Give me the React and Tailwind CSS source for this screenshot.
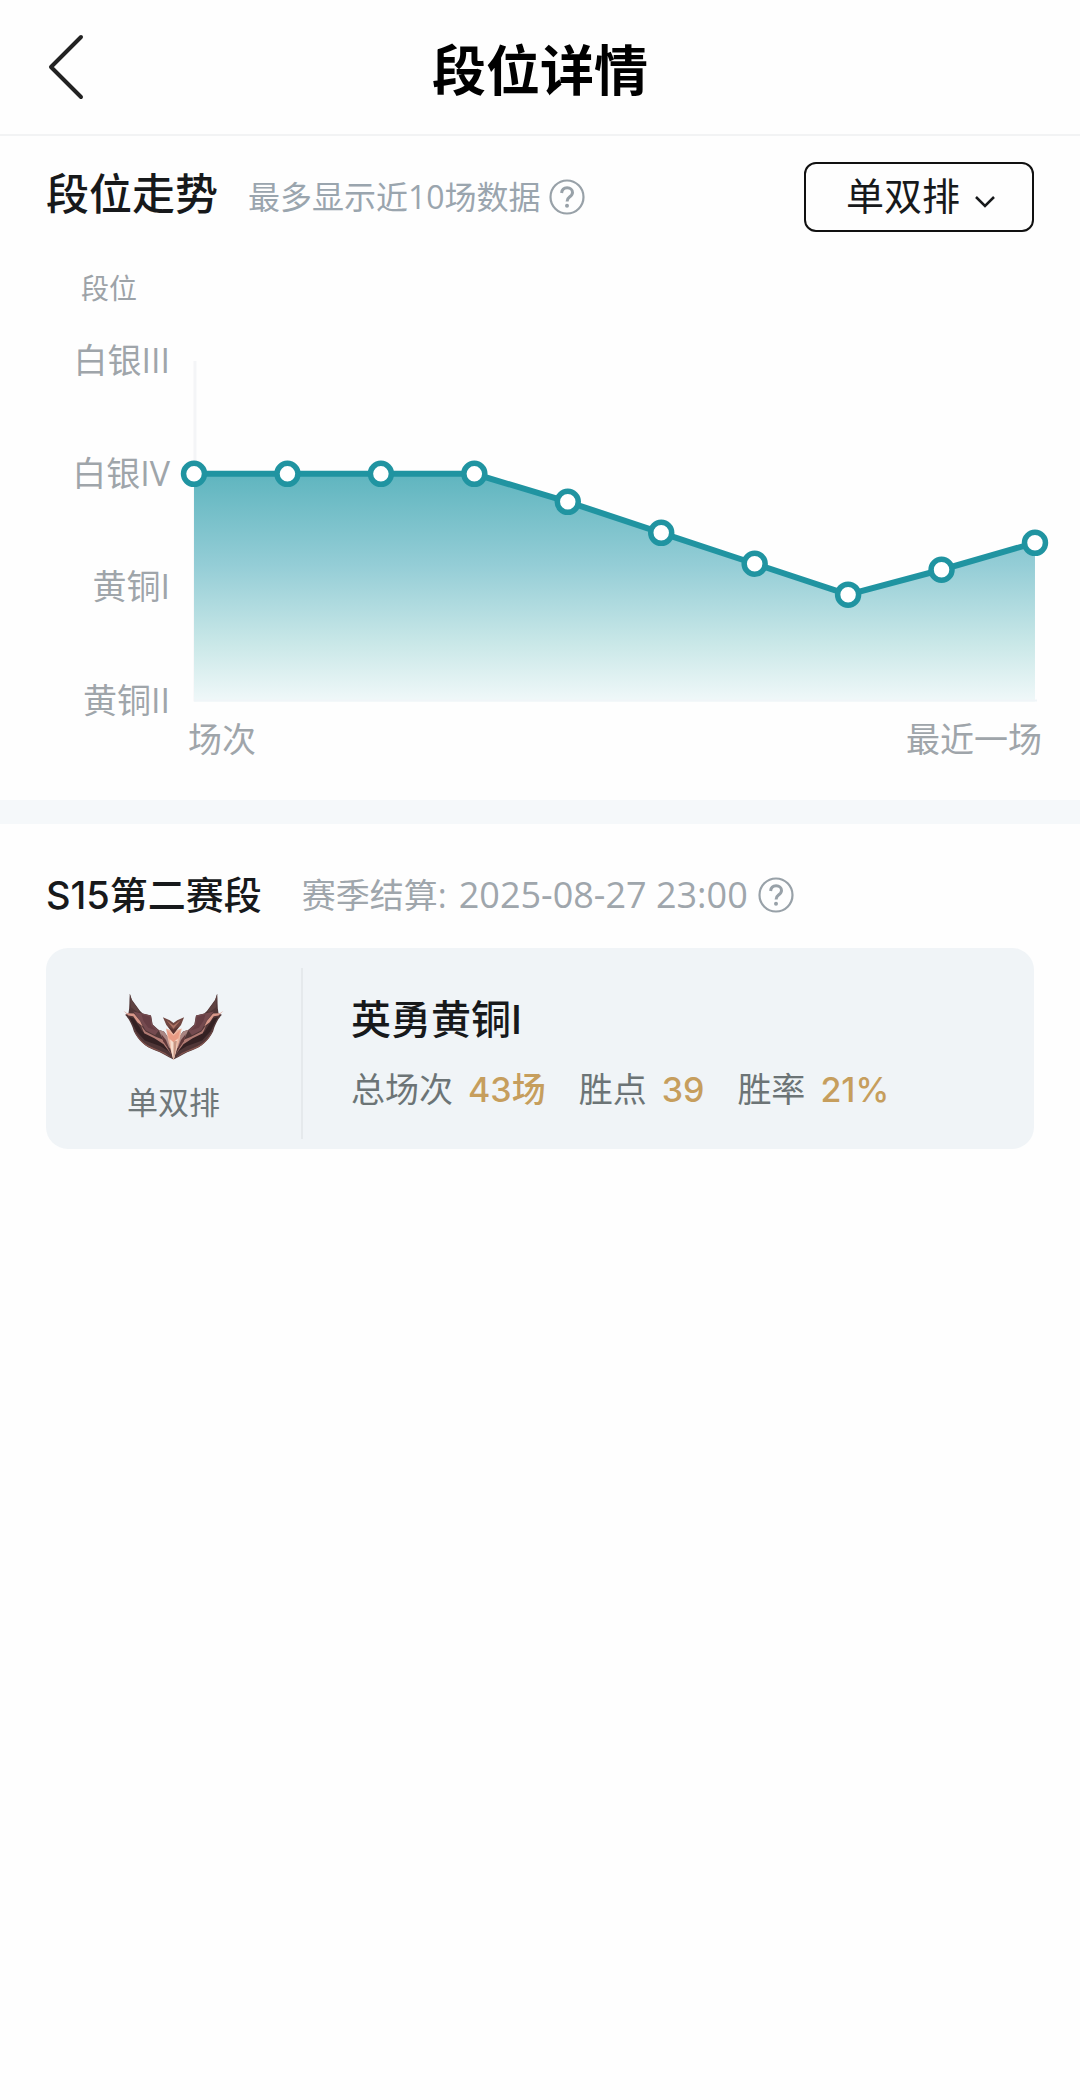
import React, { useState } from "react";

const RANKS = ["白银III", "白银IV", "黄铜I", "黄铜II"];
const VALUES = [116, 116, 116, 116, 144, 175, 206, 237, 212, 185];
const WIDTH = 842;
const HEIGHT = 344;

const STATS = [
  { label: "总场次", value: "43场" },
  { label: "胜点", value: "39" },
  { label: "胜率", value: "21%" },
];

function HelpButton({ label }) {
  return (
    <button type="button" aria-label={label} className="shrink-0 text-[#98a1a8]">
      <svg className="block size-9" viewBox="0 0 36 36" fill="none" stroke="currentColor">
        <circle cx="18" cy="18" r="16.5" strokeWidth="2.2" />
        <path d="M12.6 14c.3-3.200 2.500-5.200 5.500-5.200 3.100 0 5.400 1.900 5.400 4.700 0 2.300-1.300 3.400-3 4.600-1.700 1.200-2.400 2.100-2.400 4.300" strokeWidth="3" />
        <circle cx="18" cy="26.800" r="2" fill="currentColor" stroke="none" />
      </svg>
    </button>
  );
}

function TrendChart() {
  const points = VALUES.map((y, i) => [(i * WIDTH) / (VALUES.length - 1), y]);
  const line = points.map((p) => p.join(",")).join(" ");
  return (
    <svg viewBox={`0 0 ${WIDTH} ${HEIGHT}`} className="block w-full overflow-visible" role="img" aria-label="段位走势">
      <defs>
        <linearGradient id="area" gradientUnits="userSpaceOnUse" x1="0" y1="116" x2="0" y2="344">
          <stop offset="0" stopColor="#5fb5bf" />
          <stop offset="0.400" stopColor="#94cdd6" />
          <stop offset="0.750" stopColor="#cae8e8" />
          <stop offset="1" stopColor="#f0f8f9" />
        </linearGradient>
      </defs>
      <path d="M1 3V344" stroke="#f4f5f7" strokeWidth="3" />
      <polygon points={`0,${HEIGHT} ${line} ${WIDTH},${HEIGHT}`} fill="url(#area)" />
      <path d="M0 343H844" stroke="#f0f5f8" strokeWidth="2" />
      <polyline points={line} fill="none" stroke="#2094a1" strokeWidth="6" />
      {points.map(([x, y]) => (
        <circle key={x} cx={x} cy={y} r="10.5" fill="#fff" stroke="#2094a1" strokeWidth="5.5" />
      ))}
    </svg>
  );
}

function EmblemWing() {
  return (
    <>
      <path d="M66 40 72 58 96 91 104 98 128 104 133 130 150 146 166 151 184 176 194 233C176 226 160 213 139 206 112 196 91 177 78 151 73 133 64 113 52 102L62 98C66 78 64 60 66 40Z" fill="#503637" />
      <path d="M66 40 72 60 95 92 88 94 69 80Z" fill="#5f4241" />
      <path d="M76 92 128 104 132 130 151 148 140 162 112 147 98 122Z" fill="#744a4f" />
      <path d="M100 100 126 108 128 132 144 148 120 140 106 120Z" fill="#663e44" />
      <path d="M47 90 58 97 78 98 96 120 104 136 88 124 76 106 62 104Z" fill="#d9988a" />
      <path d="M64 108 78 113 92 134 102 150 134 165 162 184 184 212 156 194 110 177 86 151Z" fill="#342123" />
      <path d="M98 132 112 151 142 166 162 174 188 218 165 188 138 171 108 156Z" fill="#b17a73" />
      <path d="M76 138C86 166 102 184 126 195L170 214 190 229C168 216 152 209 132 202 102 190 84 168 76 138Z" fill="#85554f" />
      <path d="M150 146 166 151 178 168 185 202 168 184Z" fill="#a98582" />
      <path d="M158 158 172 176 183 204 164 180Z" fill="#61383a" />
    </>
  );
}

function BronzeEmblem() {
  return (
    <svg viewBox="46 38 296 198" className="block w-[101px]" role="img" aria-label="英勇黄铜">
      <EmblemWing />
      <g transform="matrix(-1 0 0 1 388 0)">
        <EmblemWing />
      </g>
      <path d="M172 142 194 150 218 142 212 176 194 236 178 176Z" fill="#edb5a0" />
      <path d="M184 172 194 180 206 172 202 205 194 236 187 205Z" fill="#f7ddcd" />
      <path d="M174 146 194 163 214 146 208 170 194 182 180 170Z" fill="#e99b84" />
      <path d="M194 180 204 178 200 210 194 236Z" fill="#c79683" />
      <path d="M163 109 183 118 194 126 205 118 225 109 216 132 194 158 173 132Z" fill="#704641" />
      <path d="M173 117 194 133 215 117 194 143Z" fill="#ac7163" />
      <path d="M178 136 194 146 210 136 194 158Z" fill="#573331" />
    </svg>
  );
}

export default function App() {
  const [queue, setQueue] = useState("solo");
  return (
    <div
      lang="zh-CN"
      className="min-h-screen bg-[#fefefe] text-[#17191b] [font-family:'Open_Sans','Noto_Sans_CJK_SC',sans-serif]"
    >
      <header className="grid grid-cols-[1fr_auto_1fr] items-center border-b-2 border-[#f2f3f4] px-[46px] pt-[30px] pb-[24px]">
        <button type="button" aria-label="返回" className="justify-self-start pb-1.5">
          <svg className="block h-[68px] w-10" viewBox="0 0 40 68" fill="none" stroke="#222" strokeWidth="4" strokeLinecap="round" strokeLinejoin="round">
            <path d="M35 4 5 34 35 64" />
          </svg>
        </button>
        <h1 className="text-[54px] leading-[80px] font-bold text-black">段位详情</h1>
      </header>

      <section className="px-[46px] pt-[26px] pb-[36px]">
        <div className="flex items-center">
          <h2 className="pb-1.5 text-[43px] leading-[64px] font-medium">段位走势</h2>
          <p className="mr-2 ml-[30px] text-[32px] leading-[48px] text-[#9aa5ae]">最多显示近10场数据</p>
          <HelpButton label="走势说明" />
          <div className="relative ml-auto">
            <select
              aria-label="对局类型"
              value={queue}
              onChange={(e) => setQueue(e.target.value)}
              className="block h-[70px] w-[230px] appearance-none rounded-xl border-2 border-[#111] bg-transparent pb-1 pl-[40px] text-[38px] leading-[56px]"
            >
              <option value="solo">单双排</option>
              <option value="flex">灵活排</option>
            </select>
            <svg className="pointer-events-none absolute top-[32px] right-[37px] h-4 w-6" viewBox="0 0 24 16" fill="none" stroke="#17191b" strokeWidth="2.500">
              <path d="M3 3 12 12 21 3" />
            </svg>
          </div>
        </div>

        <p className="mt-[36px] ml-[35px] text-[28px] leading-[40px] text-[#9da3a8]">段位</p>

        <div className="mt-[50px] flex">
          <ul className="-my-[22px] flex w-[124px] shrink-0 flex-col justify-between text-right text-[34px] leading-[48px] text-[#9fa5aa]">
            {RANKS.map((rank) => (
              <li key={rank}>{rank}</li>
            ))}
          </ul>
          <div className="mr-[-1px] ml-[24px] min-w-0 flex-1">
            <TrendChart />
          </div>
        </div>

        <div className="mr-[-8px] ml-[142px] mt-[12px] flex justify-between text-[34px] leading-[50px] text-[#9fa5aa]">
          <span>场次</span>
          <span>最近一场</span>
        </div>
      </section>

      <div className="h-6 bg-[#f5f8fa]" />

      <section className="px-[46px] pt-[43px]">
        <div className="flex items-center">
          <h2 className="text-[38px] leading-[56px] font-medium [font-family:'Inter','Noto_Sans_CJK_SC',sans-serif]">
            S15第二赛段
          </h2>
          <p className="mr-2.5 ml-[40px] flex gap-3 text-[34px] leading-[56px] text-[#9fa6ac]">
            <span>赛季结算:</span>
            <time dateTime="2025-08-27T23:00" className="text-[36px]">2025-08-27 23:00</time>
          </p>
          <HelpButton label="结算说明" />
        </div>

        <article className="mt-[25px] flex rounded-[22px] bg-[#f0f4f7]">
          <div className="flex w-[255px] flex-col items-center pt-[45px] pb-[23px]">
            <BronzeEmblem />
            <p className="mt-[18px] text-[31px] leading-[48px] text-[#6f7779]">单双排</p>
          </div>
          <div className="mt-[20px] mb-[10px] w-[2px] bg-[#e5e9ec]" />
          <div className="pt-[44px] pl-[48px] [font-family:'Inter','Noto_Sans_CJK_SC',sans-serif]">
            <h3 className="text-[40px] leading-[56px] font-medium">英勇黄铜I</h3>
            <dl className="mt-[17px] flex gap-[33px] text-[34px] leading-[50px]">
              {STATS.map(({ label, value }) => (
                <div key={label} className="flex gap-[15px]">
                  <dt className="text-[#6c7476]">{label}</dt>
                  <dd className="font-medium text-[#c69e5d]">{value}</dd>
                </div>
              ))}
            </dl>
          </div>
        </article>
      </section>
    </div>
  );
}
